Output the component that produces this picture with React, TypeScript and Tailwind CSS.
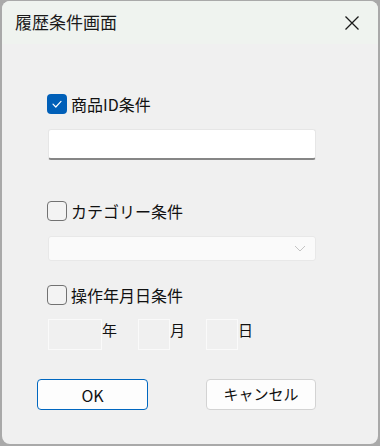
import React from "react";

const font = { fontFamily: '"Noto Sans CJK JP", "Noto Sans", sans-serif' };

function Check({ checked }: { checked?: boolean }) {
  if (checked) {
    return (
      <div className="w-[20px] h-[20px] rounded-[4px] bg-[#005fb8] flex items-center justify-center shrink-0">
        <svg width="12" height="12" viewBox="0 0 12 12" fill="none">
          <path d="M2 6.2 L4.8 9 L10 3.4" stroke="white" strokeWidth="1.2" strokeLinecap="round" strokeLinejoin="round" />
        </svg>
      </div>
    );
  }
  return <div className="w-[20px] h-[20px] rounded-[4px] border border-[#727272] bg-[#f3f3f3] shrink-0" />;
}

export default function App() {
  return (
    <div className="w-[380px] h-[446px] bg-[#a9a9a9] pt-[1px] pl-[2px]" style={font}>
      <div className="w-[376px] h-[443px] rounded-[8px] overflow-hidden bg-[#f0f0f0] flex flex-col">
        <div className="h-[43px] bg-[#eff3ef] flex items-center justify-between pl-[13px] pr-[17px] shrink-0">
          <span className="text-[17px] text-[#1a1a1a] leading-none mt-[-2px]">履歴条件画面</span>
          <svg width="18" height="18" viewBox="0 0 18 18" fill="none" className="mt-[1px]">
            <path d="M2.5 2.5 L15.5 15.5 M15.5 2.5 L2.5 15.5" stroke="#1a1a1a" strokeWidth="1.3" />
          </svg>
        </div>
        <div className="flex flex-col pl-[45px] pt-[50px]">
          <div className="flex items-center gap-[4px] h-[20px]">
            <Check checked />
            <span className="text-[16px] leading-none text-[#111]">商品ID条件</span>
          </div>
          <div className="mt-[15px] w-[268px] h-[31px] ml-[1px] bg-white border border-[#e6e6e6] border-b-[2px] border-b-[#868686] rounded-[3px]" />
          <div className="mt-[41px] flex items-center gap-[4px] h-[20px]">
            <Check />
            <span className="text-[16px] leading-none text-[#111]">カテゴリー条件</span>
          </div>
          <div className="mt-[15px] w-[268px] h-[25px] ml-[1px] bg-[#fafafa] border border-[#e8e8e8] rounded-[3px] flex items-center justify-end pr-[9px]">
            <svg width="12" height="7" viewBox="0 0 12 7" fill="none">
              <path d="M1 1 L6 6 L11 1" stroke="#c4c4c4" strokeWidth="1" />
            </svg>
          </div>
          <div className="mt-[24px] flex items-center gap-[4px] h-[20px]">
            <Check />
            <span className="text-[16px] leading-none text-[#111]">操作年月日条件</span>
          </div>
          <div className="mt-[14px] ml-[1px] flex items-start h-[31px] text-[15px] leading-none text-[#111]">
            <div className="w-[54px] h-[31px] border border-[#fafafa]" />
            <span className="mt-[3px] w-[36px]">年</span>
            <div className="w-[32px] h-[31px] border border-[#fafafa]" />
            <span className="mt-[3px] w-[36px]">月</span>
            <div className="w-[32px] h-[31px] border border-[#fafafa]" />
            <span className="mt-[3px]">日</span>
          </div>
          <div className="mt-[29px] ml-[-10px] flex items-center">
            <button className="w-[111px] h-[31px] rounded-[4px] border border-[#0067c0] bg-[#fdfdfd] text-[16px] text-[#111]">OK</button>
            <button className="ml-[58px] w-[110px] h-[31px] rounded-[4px] border border-[#d3d3d3] bg-[#fdfdfd] text-[15px] text-[#111]">キャンセル</button>
          </div>
        </div>
      </div>
    </div>
  );
}
